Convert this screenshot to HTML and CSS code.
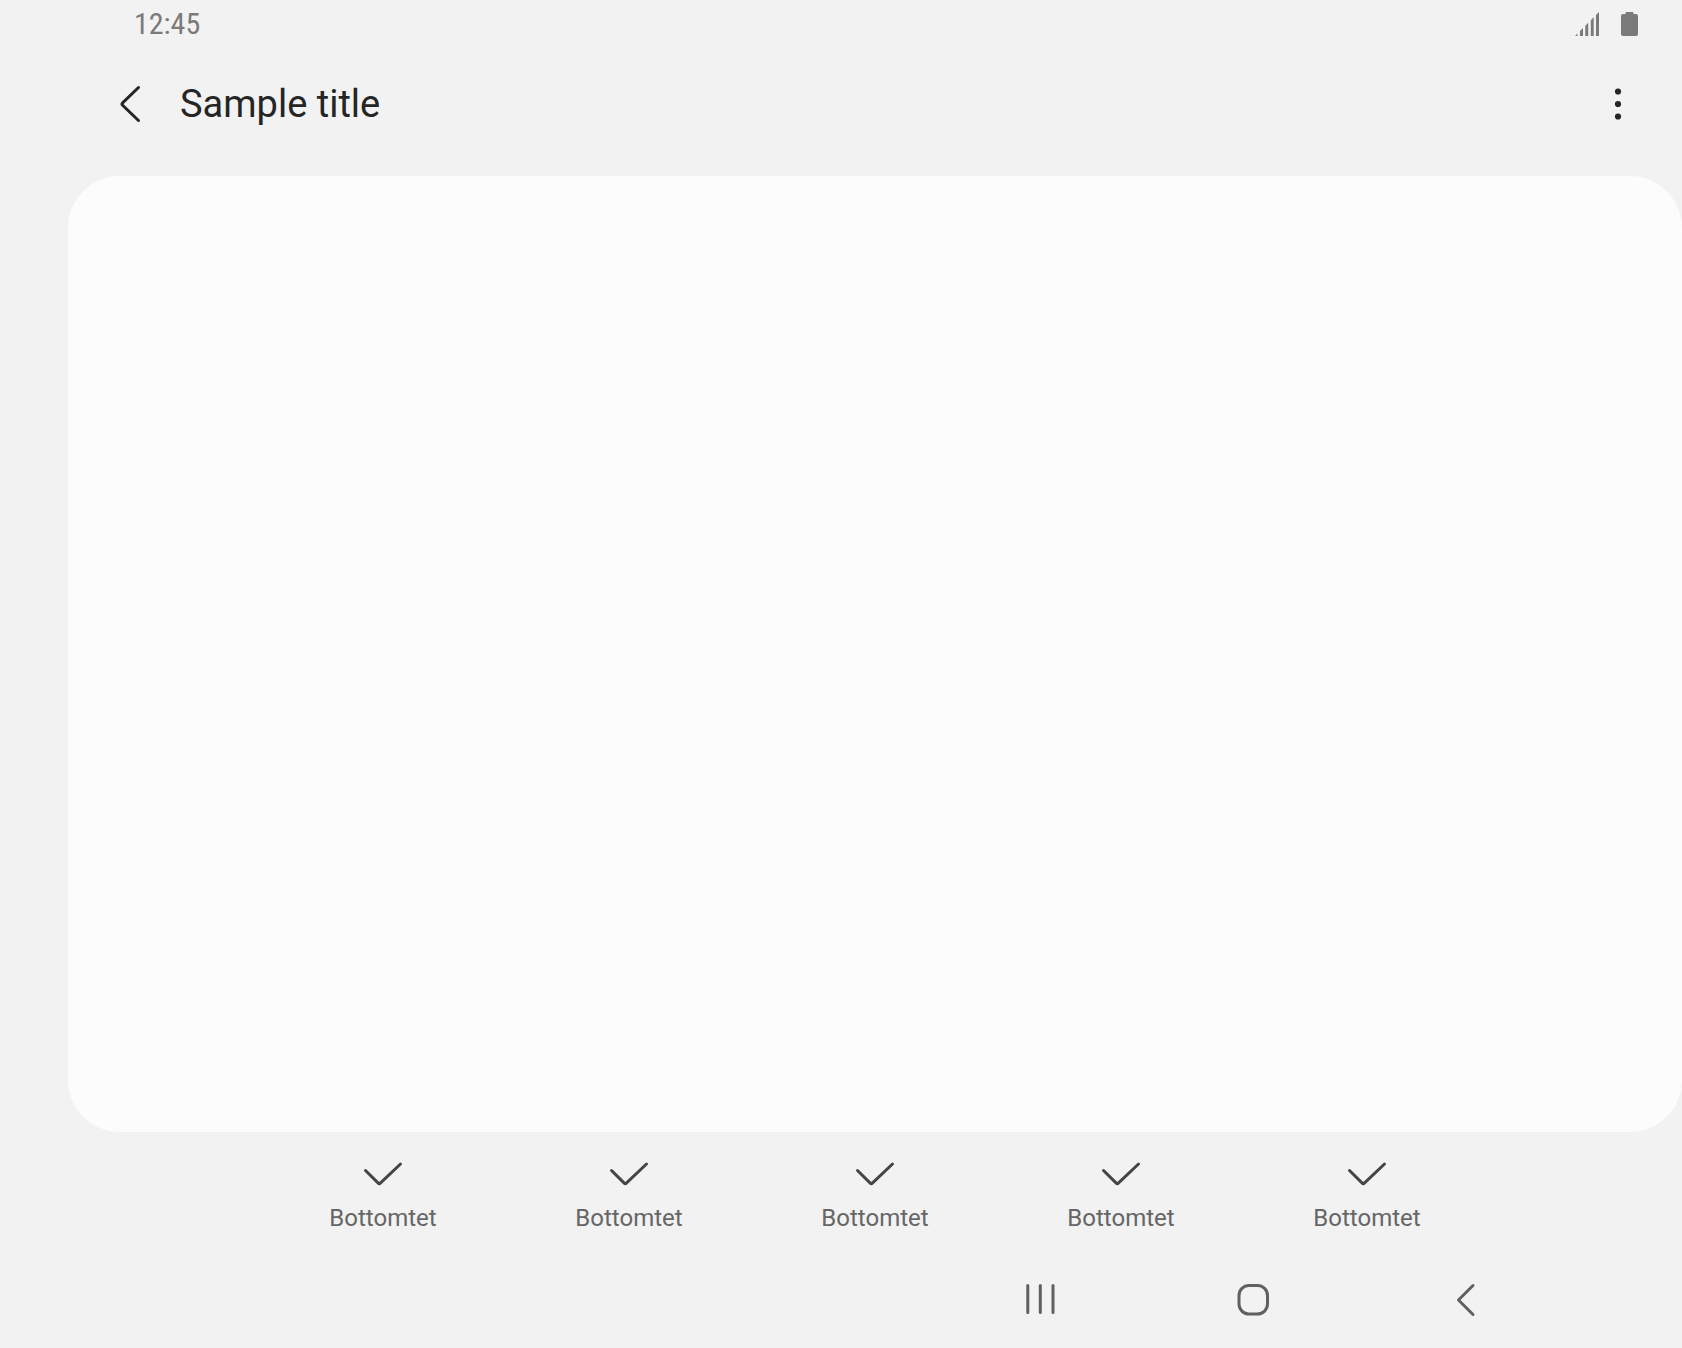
FILE: index.html
```html
<!DOCTYPE html>
<html lang="en">
<head>
<meta charset="utf-8">
<meta name="viewport" content="width=device-width, initial-scale=1">
<title>Sample title</title>
<link rel="stylesheet" href="styles.css">
</head>
<body>
<div class="status-bar">
  <time class="clock">12:45</time>
  <div class="status-icons">
    <svg class="signal" viewBox="0 0 24 24" aria-hidden="true"><path d="M0 24L2.500 21.500V24ZM5 24V19L8 16V24ZM10.300 24V13.700L13.200 10.800V24ZM15.800 24V8.200L18.700 5.300V24ZM21 24V3L24 0V24Z"/></svg>
    <svg class="battery" viewBox="0 0 17 24" aria-hidden="true"><path d="M5.500 0H11.500Q12.500 0 12.500 1V2H15Q17 2 17 4V22Q17 24 15 24H2Q0 24 0 22V4Q0 2 2 2H4.500V1Q4.500 0 5.500 0Z"/></svg>
  </div>
</div>
<header class="app-bar">
  <button class="icon-button" type="button" aria-label="Navigate up">
    <svg class="icon" viewBox="0 0 40 40"><path d="M28.500 3.500L12.600 18.800Q11.400 20 12.600 21.200L28.500 36.500"/></svg>
  </button>
  <h1 class="title">Sample title</h1>
  <button class="icon-button" type="button" aria-label="More options">
    <svg class="icon dots" viewBox="0 0 40 40"><circle cx="20" cy="7.500" r="3.100"/><circle cx="20" cy="20" r="3.100"/><circle cx="20" cy="32.500" r="3.100"/></svg>
  </button>
</header>
<main class="panel"></main>
<div class="bottom-bar">
  <button class="action" type="button"><svg class="icon" viewBox="0 0 40 40"><path d="M2.500 16.500L15 28.900Q16.300 30.200 17.600 28.900L37.500 10"/></svg>Bottomtet</button>
  <button class="action" type="button"><svg class="icon" viewBox="0 0 40 40"><path d="M2.500 16.500L15 28.900Q16.300 30.200 17.600 28.900L37.500 10"/></svg>Bottomtet</button>
  <button class="action" type="button"><svg class="icon" viewBox="0 0 40 40"><path d="M2.500 16.500L15 28.900Q16.300 30.200 17.600 28.900L37.500 10"/></svg>Bottomtet</button>
  <button class="action" type="button"><svg class="icon" viewBox="0 0 40 40"><path d="M2.500 16.500L15 28.900Q16.300 30.200 17.600 28.900L37.500 10"/></svg>Bottomtet</button>
  <button class="action" type="button"><svg class="icon" viewBox="0 0 40 40"><path d="M2.500 16.500L15 28.900Q16.300 30.200 17.600 28.900L37.500 10"/></svg>Bottomtet</button>
</div>
<nav class="nav-bar" aria-label="System">
  <button class="nav-button" type="button" aria-label="Recents"><svg class="icon" viewBox="0 0 40 40"><path d="M7.800 5.500V32.500M20.300 5.500V32.500M33 5.500V32.500"/></svg></button>
  <button class="nav-button" type="button" aria-label="Home"><svg class="icon" viewBox="0 0 40 40"><rect x="6" y="5.500" width="28.500" height="28.500" rx="10"/></svg></button>
  <button class="nav-button" type="button" aria-label="Back"><svg class="icon" viewBox="0 0 40 40"><path d="M27 5.500L12.500 20L27 34.500"/></svg></button>
</nav>
</body>
</html>
```
FILE: styles.css
```css
* {
  box-sizing: border-box;
}

body {
  margin: 0;
  padding-left: 68px;
  min-height: 100vh;
  display: flex;
  flex-direction: column;
  background: #f2f2f2;
  color: #252525;
  font-family: Roboto, "Noto Sans", sans-serif;
}

button {
  border: 0;
  padding: 0;
  background: none;
  color: inherit;
  font: inherit;
}

.icon {
  display: block;
  width: 40px;
  height: 40px;
  fill: none;
  stroke: currentColor;
  stroke-width: 3;
  stroke-linecap: round;
  stroke-linejoin: round;
}

.dots {
  fill: currentColor;
  stroke: none;
}

.status-bar {
  display: flex;
  align-items: center;
  justify-content: space-between;
  height: 48px;
  padding: 0 44px 0 66px;
  color: #7a7a7a;
}

.clock {
  font-family: "Roboto Condensed", Roboto, sans-serif;
  font-size: 30px;
  line-height: 48px;
}

.status-icons {
  display: flex;
  gap: 22px;
  fill: currentColor;
}

.signal {
  width: 24px;
  height: 24px;
}

.battery {
  width: 17px;
  height: 24px;
}

.app-bar {
  display: flex;
  align-items: center;
  height: 112px;
  margin-bottom: 16px;
  padding: 0 44px 0 42px;
}

.title {
  flex: 1;
  margin: 0;
  padding-left: 30px;
  font-size: 38px;
  line-height: 48px;
  font-weight: 400;
}

.panel {
  flex: 1;
  border-radius: 52px;
  background: #fcfcfc;
}

.bottom-bar {
  display: flex;
  justify-content: center;
  height: 120px;
  padding-top: 22px;
}

.action {
  flex: 0 1 246px;
  display: flex;
  flex-direction: column;
  align-items: center;
  gap: 10px;
  color: #666;
  font-size: 24px;
  line-height: 28px;
}

.action .icon {
  color: #454545;
}

.nav-bar {
  display: flex;
  justify-content: flex-end;
  height: 96px;
  padding-right: 110px;
  color: #606060;
}

.nav-button {
  flex: 0 1 213px;
  display: flex;
  align-items: center;
  justify-content: center;
}
```
